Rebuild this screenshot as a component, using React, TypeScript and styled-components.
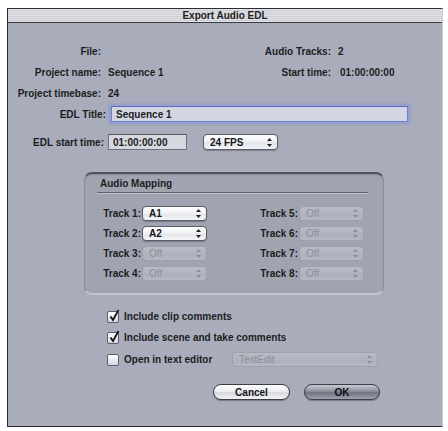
import React from "react";
import styled, { createGlobalStyle, css } from "styled-components";

const Global = createGlobalStyle`
  html, body { margin: 0; padding: 0; background: #ffffff; }
  body { font-family: "Liberation Sans", Arial, sans-serif; }
`;

const Window = styled.div`
  margin: 8px 0 0 7px;
  width: 436px;
  height: 419px;
  box-sizing: border-box;
  border-left: 1px solid #2a2c33;
  border-top: 1px solid #2a2c33;
  border-bottom: 1px solid #2a2c33;
  border-right: 1px solid #c9ccd6;
  background: #a9acba;
  display: flex;
  flex-direction: column;
  font-family: "Liberation Sans", Arial, sans-serif;
  font-weight: bold;
  font-size: 10px;
  color: #1c1d22;
`;

const TitleBar = styled.div`
  height: 13px;
  border-bottom: 1px solid #3a3c44;
  background: repeating-linear-gradient(
    to bottom,
    #e2e2e6 0px,
    #e2e2e6 1px,
    #cfd0d6 1px,
    #cfd0d6 2px
  );
  display: flex;
  align-items: center;
  justify-content: center;
  font-size: 10px;
  color: #222;
`;

const Body = styled.div`
  flex: 1;
  padding: 18px 0 0 0;
  display: flex;
  flex-direction: column;
`;

const InfoGrid = styled.div`
  display: grid;
  grid-template-columns: 93px 150px 80px auto;
  grid-auto-rows: 21px;
  align-items: center;
`;

const Label = styled.span<{ $w?: number }>`
  text-align: right;
  white-space: nowrap;
  ${(p) => p.$w !== undefined && css`width: ${p.$w}px; flex: none;`}
`;

const Value = styled.span<{ $pad?: number }>`
  padding-left: ${(p) => p.$pad ?? 7}px;
  white-space: nowrap;
`;

const FieldRow = styled.div<{ $mt: number; $gap: number }>`
  display: flex;
  align-items: center;
  margin-top: ${(p) => p.$mt}px;
  gap: ${(p) => p.$gap}px;
`;

const TextField = styled.div<{ $w: number; $focus?: boolean }>`
  width: ${(p) => p.$w}px;
  height: 16px;
  box-sizing: border-box;
  padding-left: 4px;
  display: flex;
  align-items: center;
  background: ${(p) => (p.$focus ? "#d3d6e2" : "#d6d8df")};
  border: 1px solid ${(p) => (p.$focus ? "#6f80c6" : "#6e717c")};
  border-top-color: ${(p) => (p.$focus ? "#5a6bb4" : "#55585f")};
  ${(p) =>
    p.$focus &&
    css`
      box-shadow: 0 0 0 1px #95a3da, 0 0 2px 2px rgba(120, 140, 215, 0.55);
    `}
`;

const Popup = styled.div<{ $w: number; $disabled?: boolean; $h?: number; $ml?: number }>`
  width: ${(p) => p.$w}px;
  height: ${(p) => p.$h ?? 15}px;
  margin-left: ${(p) => p.$ml ?? 0}px;
  box-sizing: border-box;
  border-radius: 4px;
  display: flex;
  align-items: center;
  justify-content: space-between;
  padding: 0 5px 0 6px;
  ${(p) =>
    p.$disabled
      ? css`
          background: linear-gradient(#b9bcc7, #b1b4bf 50%, #adb0bb 51%, #b5b8c2);
          border: 1px solid #9ea1ac;
          color: #8c8f9a;
          font-weight: normal;
        `
      : css`
          background: linear-gradient(#ffffff, #eef0f4 50%, #e2e4ea 51%, #f4f5f8);
          border: 1px solid #5b5e68;
          color: #15161a;
          box-shadow: 0 1px 1px rgba(0, 0, 0, 0.25);
        `}
`;

const Arrows = ({ color }: { color: string }) => (
  <svg width="5" height="9" viewBox="0 0 5 9">
    <path d="M2.5 0 L5 3 L0 3 Z" fill={color} />
    <path d="M2.5 9 L5 6 L0 6 Z" fill={color} />
  </svg>
);

const GroupBox = styled.div`
  margin: 22px 0 0 76px;
  width: 300px;
  height: 123px;
  box-sizing: border-box;
  border-radius: 8px;
  background: #a0a3b0;
  border: 1px solid #8d909c;
  border-top: 2px solid #50535d;
  border-bottom: 2px solid #c3c6d0;
  box-shadow: inset 0 1px 1px rgba(0, 0, 0, 0.15);
  padding: 2px 0 0 12px;
  display: flex;
  flex-direction: column;
`;

const GroupTitle = styled.div`
  padding: 2px 0 3px 3px;
  width: 268px;
  border-bottom: 1px solid #5f626c;
  box-shadow: 0 1px 0 #c0c3cd;
`;

const TrackGrid = styled.div`
  margin-top: 10px;
  display: grid;
  grid-template-columns: 157px 110px;
  grid-auto-rows: 20px;
  align-items: center;
`;

const TrackCell = styled.div`
  display: flex;
  align-items: center;
  gap: 1px;
  padding-left: 2px;
`;

const TrackLabel = styled.span`
  width: 42px;
  text-align: right;
  white-space: nowrap;
`;

const Checks = styled.div`
  margin: 15px 0 0 99px;
  display: flex;
  flex-direction: column;
  gap: 8px;
`;

const CheckRow = styled.div<{ $mt?: number }>`
  display: flex;
  align-items: center;
  height: 13px;
  gap: 5px;
  margin-top: ${(p) => p.$mt ?? 0}px;
`;

const CheckText = styled.span<{ $w?: number }>`
  white-space: nowrap;
  ${(p) => p.$w !== undefined && css`width: ${p.$w}px;`}
`;

const Box = styled.div`
  width: 12px;
  height: 12px;
  box-sizing: border-box;
  border: 1px solid #5d6069;
  border-radius: 2px;
  background: linear-gradient(#ffffff, #e6e8ee 55%, #d7d9e0);
  position: relative;
  flex: none;
`;

const Tick = styled.svg`
  position: absolute;
  left: 1px;
  top: -3px;
`;

const Buttons = styled.div`
  margin: 18px 0 0 205px;
  display: flex;
  gap: 14px;
`;

const PushButton = styled.div<{ $default?: boolean; $w: number }>`
  width: ${(p) => p.$w}px;
  height: 16px;
  box-sizing: border-box;
  border-radius: 8px;
  display: flex;
  align-items: center;
  justify-content: center;
  border: 1px solid #3a3d46;
  ${(p) =>
    p.$default
      ? css`
          background: linear-gradient(#c8cbd4, #8c909c 45%, #6f7380 55%, #9ea2ae);
          color: #0d0e12;
        `
      : css`
          background: linear-gradient(#ffffff, #eceef2 45%, #d6d8de 55%, #f3f4f7);
          color: #15161a;
        `}
  box-shadow: 0 1px 1px rgba(0, 0, 0, 0.3);
`;

const Check = ({ checked }: { checked: boolean }) => (
  <Box>
    {checked && (
      <Tick width="11" height="13" viewBox="0 0 11 13">
        <path d="M1.5 7.5 L4 11 L9.5 1" stroke="#15161a" strokeWidth="1.8" fill="none" />
      </Tick>
    )}
  </Box>
);

const tracks: [string, string, boolean][] = [
  ["Track 1:", "A1", false],
  ["Track 5:", "Off", true],
  ["Track 2:", "A2", false],
  ["Track 6:", "Off", true],
  ["Track 3:", "Off", true],
  ["Track 7:", "Off", true],
  ["Track 4:", "Off", true],
  ["Track 8:", "Off", true],
];

export default function App() {
  return (
    <>
      <Global />
      <Window>
        <TitleBar>Export Audio EDL</TitleBar>
        <Body>
          <InfoGrid>
            <Label>File:</Label>
            <Value />
            <Label>Audio Tracks:</Label>
            <Value $pad={7}>2</Value>
            <Label>Project name:</Label>
            <Value>Sequence 1</Value>
            <Label>Start time:</Label>
            <Value $pad={9}>01:00:00:00</Value>
            <Label>Project timebase:</Label>
            <Value>24</Value>
          </InfoGrid>
          <FieldRow $mt={2} $gap={5}>
            <Label $w={98}>EDL Title:</Label>
            <TextField $w={297} $focus>
              Sequence 1
            </TextField>
          </FieldRow>
          <FieldRow $mt={12} $gap={4}>
            <Label $w={96}>EDL start time:</Label>
            <TextField $w={79}>01:00:00:00</TextField>
            <Popup $w={75} $h={16} $ml={12}>
              <span>24 FPS</span>
              <Arrows color="#222" />
            </Popup>
          </FieldRow>
          <GroupBox>
            <GroupTitle>Audio Mapping</GroupTitle>
            <TrackGrid>
              {tracks.map(([l, v, d]) => (
                <TrackCell key={l}>
                  <TrackLabel>{l}</TrackLabel>
                  <Popup $w={65} $disabled={d}>
                    <span>{v}</span>
                    <Arrows color={d ? "#8c8f9a" : "#222"} />
                  </Popup>
                </TrackCell>
              ))}
            </TrackGrid>
          </GroupBox>
          <Checks>
            <CheckRow>
              <Check checked />
              <CheckText>Include clip comments</CheckText>
            </CheckRow>
            <CheckRow>
              <Check checked />
              <CheckText>Include scene and take comments</CheckText>
            </CheckRow>
            <CheckRow $mt={1}>
              <Check checked={false} />
              <CheckText $w={103}>Open in text editor</CheckText>
              <Popup $w={146} $disabled>
                <span>TextEdit</span>
                <Arrows color="#8c8f9a" />
              </Popup>
            </CheckRow>
          </Checks>
          <Buttons>
            <PushButton $w={77}>Cancel</PushButton>
            <PushButton $w={76} $default>
              OK
            </PushButton>
          </Buttons>
        </Body>
      </Window>
    </>
  );
}
